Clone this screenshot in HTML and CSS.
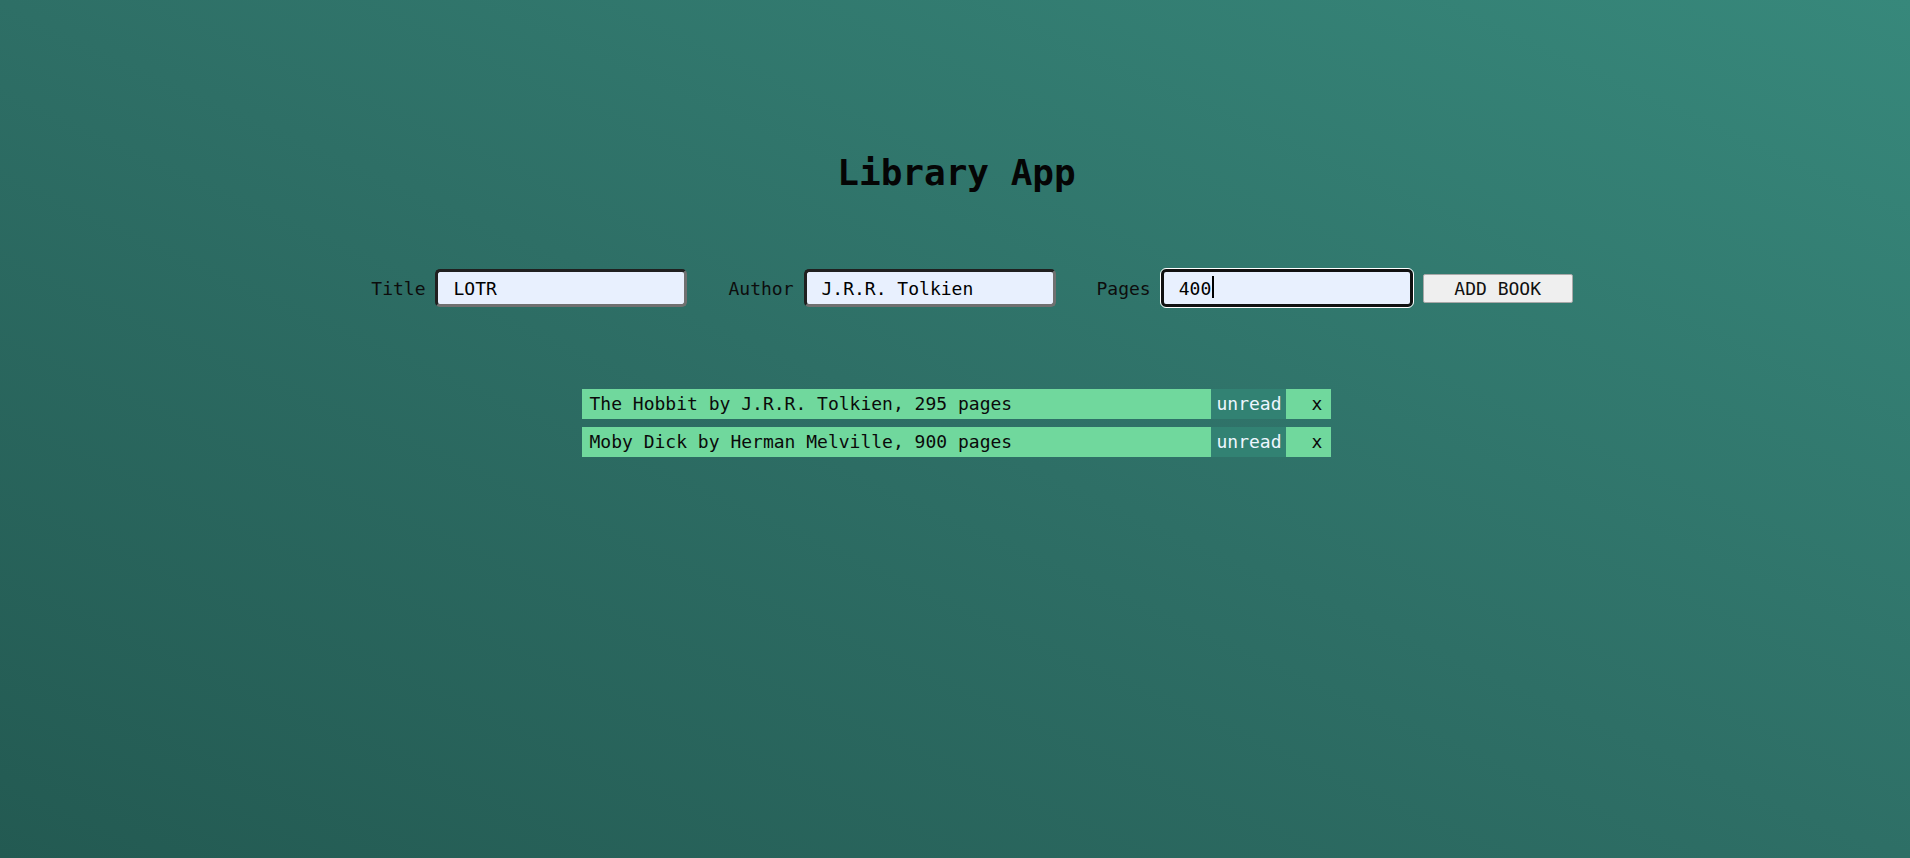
FILE: index.html
```html
<!DOCTYPE html>
<html lang="en">
<head>
<meta charset="utf-8">
<title>Library App</title>
<link rel="stylesheet" href="styles.css">
</head>
<body>
<main class="app">
  <h1 class="app-title">Library App</h1>
  <form class="book-form">
    <div class="field">
      <label class="field-label" for="title">Title</label>
      <input class="field-input" id="title" type="text" value="LOTR">
    </div>
    <div class="field">
      <label class="field-label" for="author">Author</label>
      <input class="field-input" id="author" type="text" value="J.R.R. Tolkien">
    </div>
    <div class="field">
      <label class="field-label" for="pages">Pages</label>
      <span class="input-wrap">
        <input class="field-input is-focused" id="pages" type="text" value="400">
        <span class="caret"></span>
      </span>
    </div>
    <button class="add-btn" type="button">ADD BOOK</button>
  </form>
  <ul class="book-list">
    <li class="book">
      <span class="book-text">The Hobbit by J.R.R. Tolkien, 295 pages</span>
      <span class="book-status">unread</span>
      <span class="book-remove">x</span>
    </li>
    <li class="book">
      <span class="book-text">Moby Dick by Herman Melville, 900 pages</span>
      <span class="book-status">unread</span>
      <span class="book-remove">x</span>
    </li>
  </ul>
</main>
</body>
</html>
```

FILE: styles.css
```css
html, body {
  margin: 0;
  padding: 0;
  height: 100%;
}

body {
  background: linear-gradient(to top right, #235a52 0%, #2e6f66 50%, #37887b 100%);
  font-family: "DejaVu Sans Mono", "Liberation Mono", monospace;
  font-size: 18px;
  color: #0d0d0d;
  overflow: hidden;
}

.app {
  display: flex;
  flex-direction: column;
  align-items: center;
  padding-top: 152px;
}

.app-title {
  margin: 0 0 0 3px;
  font-size: 36px;
  font-weight: bold;
  line-height: normal;
  color: #050505;
}

.book-form {
  display: flex;
  align-items: center;
  justify-content: center;
  gap: 41px;
  width: 100%;
  box-sizing: border-box;
  padding-left: 34px;
  margin-top: 76px;
}

.field {
  display: flex;
  align-items: center;
  gap: 10px;
}

.field-label {
  color: #0d0d0d;
}

.field-input {
  box-sizing: border-box;
  width: 252px;
  height: 38px;
  padding: 0 15px;
  border: 3px solid;
  border-color: #202020 #707070 #707070 #202020;
  border-radius: 5px;
  background: #e8f0fe;
  font-family: inherit;
  font-size: 18px;
  color: #000;
  outline: none;
}

.field-input.is-focused {
  border-color: #111;
  outline: 1px solid #ffffff;
  outline-offset: 0;
  caret-color: transparent;
}

.input-wrap {
  position: relative;
  display: inline-flex;
}

.caret {
  position: absolute;
  left: 51px;
  top: 7px;
  width: 2px;
  height: 22px;
  background: #000;
}

.add-btn {
  box-sizing: border-box;
  width: 150px;
  height: 29px;
  margin-left: -31px;
  padding: 0;
  border: 1px solid #a8a8a8;
  border-radius: 2px;
  background: #efefef;
  font-family: inherit;
  font-size: 18px;
  color: #111;
}

.book-list {
  list-style: none;
  margin: 82px 0 0 2px;
  padding: 0;
  display: flex;
  flex-direction: column;
  gap: 8px;
  width: 749px;
}

.book {
  display: flex;
  height: 30px;
  line-height: 30px;
  background: #70d89d;
}

.book-text {
  flex: 1;
  padding-left: 8px;
  color: #0a0a0a;
}

.book-status {
  width: 75px;
  box-sizing: border-box;
  padding: 0 4px 0 6px;
  background: #328273;
  color: #eef6ff;
}

.book-remove {
  width: 45px;
  box-sizing: border-box;
  padding-left: 26px;
  color: #0a0a0a;
}
```
